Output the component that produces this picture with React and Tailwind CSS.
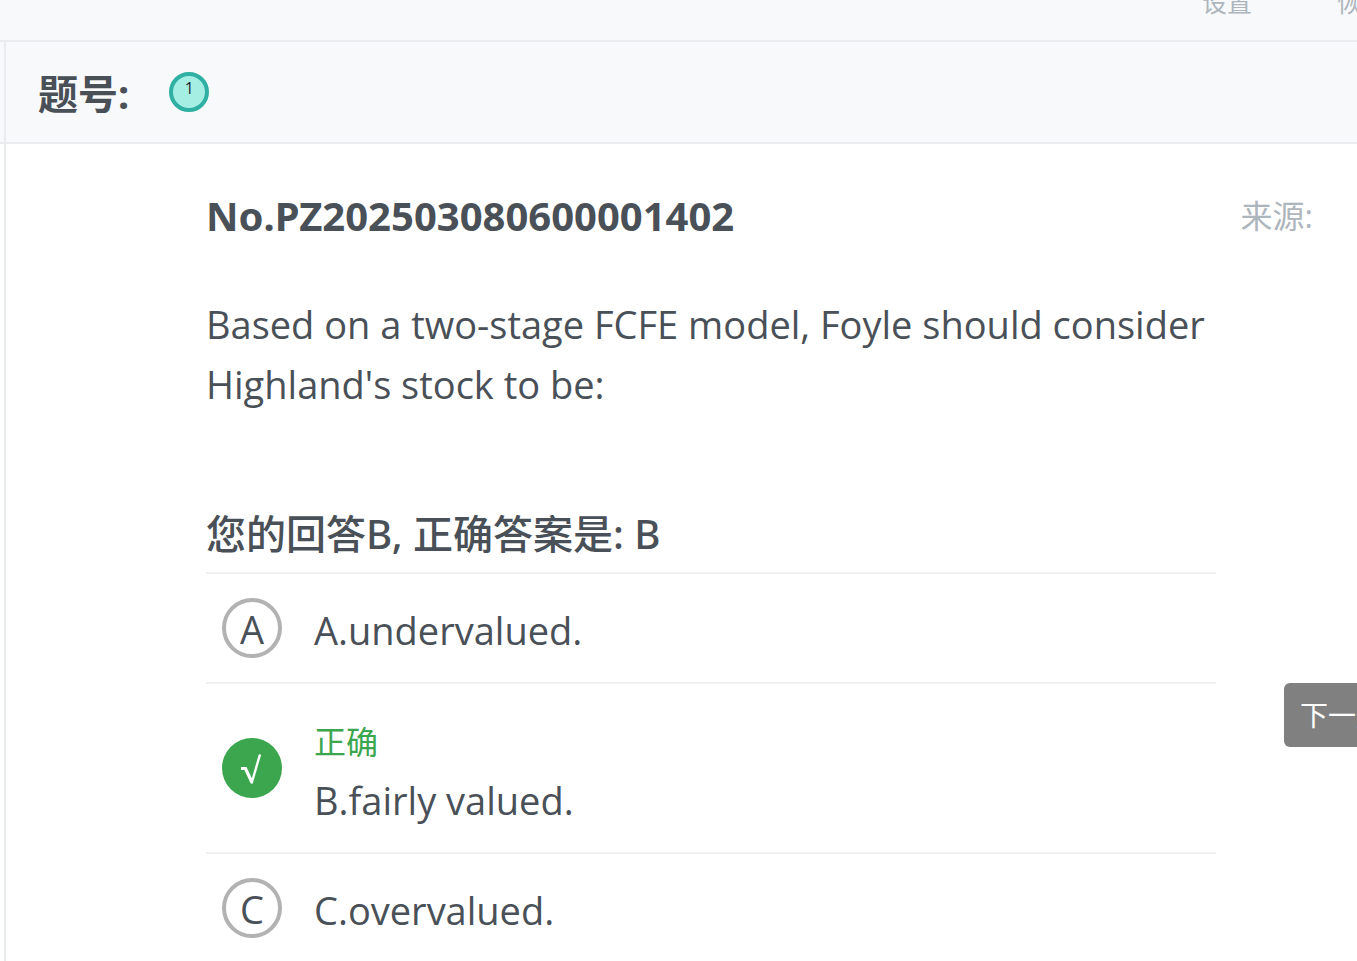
const choices = [
  { key: 'A', text: 'A.undervalued.', correct: false },
  { key: 'B', text: 'B.fairly valued.', correct: true },
  { key: 'C', text: 'C.overvalued.', correct: false },
];

function RootMark() {
  return (
    <svg viewBox="0 0 60 60" className="size-[60px]" fill="none" stroke="currentColor" aria-hidden="true">
      <path d="M19 30.5h4.5l6.3 13.5" strokeWidth="3.2" />
      <path d="M29.5 45.5 38 16.5" strokeWidth="2.4" />
    </svg>
  );
}

function Choice({ choice }) {
  return (
    <li className={`flex items-center gap-8 border-t-2 border-[#f0f1f2] pl-4 ${choice.correct ? 'h-[170px]' : 'h-[110px]'}`}>
      <button
        aria-label={`Choice ${choice.key}`}
        className={`flex size-[60px] shrink-0 items-center justify-center rounded-full text-[38px] leading-none ${
          choice.correct ? 'bg-[#3ca64f] text-white' : 'border-4 border-[#b2b2b2] pt-0.5'
        }`}
      >
        {choice.correct ? <RootMark /> : choice.key}
      </button>
      <div className={choice.correct ? 'pt-3' : ''}>
        {choice.correct && <p className="text-[32px] leading-[48px] text-[#3ca64f]">正确</p>}
        <p className="pt-1 text-[38px] leading-[60px]">{choice.text}</p>
      </div>
    </li>
  );
}

export default function App() {
  return (
    <div className="flex h-screen flex-col overflow-hidden bg-white font-['Open_Sans','Noto_Sans_CJK_SC',sans-serif] text-[#495057]">
      <header className="flex h-[42px] shrink-0 justify-end overflow-hidden border-b-2 border-[#e9ecef] bg-[#f8f9fb]">
        <nav className="-mr-[30px] flex h-full gap-[85px] text-[25px] leading-9 whitespace-nowrap text-[#adb5bd]">
          <a href="#settings" className="-mt-4">设置</a>
          <a href="#restore" className="-mt-4">恢复</a>
        </nav>
      </header>
      <div className="h-[102px] shrink-0 border-b-2 border-[#e9ecef] bg-[#f8f9fb] pl-1">
        <div className="flex h-full items-center gap-10 border-l-2 border-[#e9ecef] pl-8">
          <h1 className="pt-1 font-['Noto_Sans','Noto_Sans_CJK_SC',sans-serif] text-[40px] leading-[60px] font-bold">题号:</h1>
          <button className="flex size-10 items-start justify-center rounded-full border-4 border-[#2fb0a2] bg-[#a5eee4] pt-0.5 text-base leading-5 text-[#212529]">1</button>
        </div>
      </div>
      <div className="flex min-h-0 flex-1 pl-1">
        <main className="min-w-0 flex-1 border-l-2 border-[#e9ecef] pt-[42px] pl-[200px]">
          <div className="flex items-center justify-between pr-11">
            <h2 className="font-['Noto_Sans',sans-serif] text-[40px] leading-[60px] font-bold">No.PZ202503080600001402</h2>
            <span className="text-[32px] leading-[48px] text-[#adb5bd]">来源:</span>
          </div>
          <div className="mr-[141px]">
            <p className="mt-12 text-[38px] leading-[60px]">Based on a two-stage FCFE model, Foyle should consider Highland's stock to be:</p>
            <h3 className="mt-[90px] mb-2 font-['Noto_Sans','Noto_Sans_CJK_SC',sans-serif] text-[40px] leading-[60px] font-medium">您的回答B, 正确答案是: B</h3>
            <ul>
              {choices.map((choice) => <Choice key={choice.key} choice={choice} />)}
            </ul>
          </div>
        </main>
      </div>
      <button className="absolute top-[683px] left-[calc(100%-73px)] h-16 w-[73px] overflow-hidden rounded-l-md bg-[#808080] pl-4 text-left text-[28px] whitespace-nowrap text-white">下一题</button>
    </div>
  );
}
